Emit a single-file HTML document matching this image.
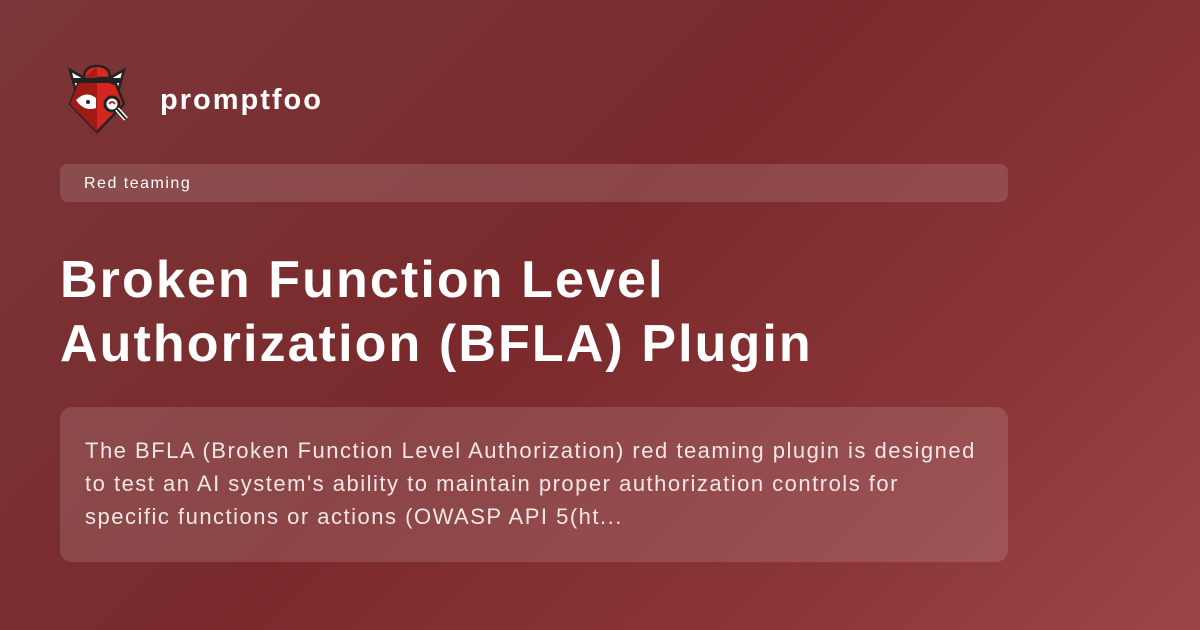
<!DOCTYPE html>
<html><head><meta charset="utf-8"><style>
body{margin:0;width:1200px;height:630px;overflow:hidden;font-family:"Liberation Sans",sans-serif;
background:linear-gradient(135deg,#7a3638 0%,#7a2a2c 45%,#8a3537 75%,#9a4546 100%);position:relative;color:#fff}
.logo{position:absolute;left:66px;top:64px}
.brand{position:absolute;left:160px;top:84px;font-size:29px;font-weight:bold;letter-spacing:2px}
.tag{position:absolute;left:60px;top:164px;width:948px;height:38px;border-radius:8px;background:rgba(255,255,255,0.13)}
.tag span{position:absolute;left:24px;top:11px;font-size:16px;letter-spacing:1.5px}
h1{position:absolute;left:60px;top:248px;margin:0;font-size:52px;line-height:64px;font-weight:bold;letter-spacing:2.1px;white-space:nowrap}
.desc{position:absolute;left:60px;top:407px;width:948px;height:155px;border-radius:12px;background:rgba(255,255,255,0.13)}
.desc p{margin:0;position:absolute;left:25px;top:27px;width:920px;font-size:22px;line-height:33px;color:#f3e6e6;letter-spacing:1.5px;white-space:nowrap}
</style></head><body>
<svg class="logo" width="66" height="70" viewBox="0 0 66 70">
<polygon points="4,6 18,14 10,28" fill="#fff" stroke="#222" stroke-width="2.5"/>
<polygon points="58,6 44,14 52,28" fill="#fff" stroke="#222" stroke-width="2.5"/>
<polygon points="31,14 50,20 58,40 31,68 4,40 12,20" fill="#d4261e" stroke="#222" stroke-width="2.5"/>
<polygon points="31,14 31,68 4,40 12,20" fill="#a01b16"/>
<path d="M18,14 Q18,2 31,2 Q44,2 44,14 Z" fill="#d92a22" stroke="#222" stroke-width="2.5"/>
<path d="M18,14 L31,2 L31,14 Z" fill="#a81d18"/>
<rect x="6" y="14" width="50" height="5" rx="2" fill="#222"/>
<path d="M10,36 Q20,26 30,34 L30,44 Q18,48 10,36 Z" fill="#fff"/>
<circle cx="22" cy="38" r="2" fill="#222"/>
<circle cx="46" cy="40" r="7" fill="#fff" stroke="#222" stroke-width="3"/>
<path d="M43,40 Q46,36 49,40" stroke="#c8221d" stroke-width="2" fill="none"/>
<line x1="51" y1="45" x2="60" y2="55" stroke="#fff" stroke-width="5"/>
<line x1="51" y1="45" x2="60" y2="55" stroke="#222" stroke-width="2"/>
</svg>
<div class="brand">promptfoo</div>
<div class="tag"><span>Red teaming</span></div>
<h1>Broken Function Level<br>Authorization (BFLA) Plugin</h1>
<div class="desc"><p>The BFLA (Broken Function Level Authorization) red teaming plugin is designed<br>to test an AI system's ability to maintain proper authorization controls for<br>specific functions or actions (OWASP API 5(ht...</p></div>
</body></html>
